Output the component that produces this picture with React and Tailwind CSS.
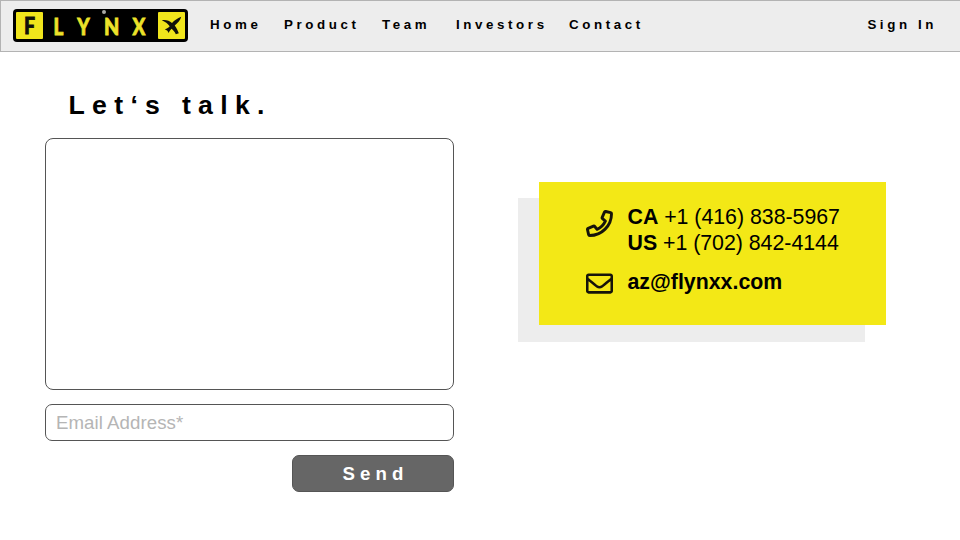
import React from "react";
import { FaRegEnvelope } from "react-icons/fa";

function Logo() {
  return (
    <div className="flex h-[33px] w-[175px] shrink-0 items-center rounded-[4px] bg-black pl-[3px] pr-[3px] font-['Lato','Open_Sans',sans-serif] text-[23px] leading-[29px] font-black text-[#ece22a]">
      <div className="flex h-[27px] w-[27px] items-center justify-center rounded-[1px] bg-[#f0e51c] text-[#11110a]">
        <span className="scale-x-[0.85] pl-[1px] [-webkit-text-stroke:0.8px_currentColor]">F</span>
      </div>
      <div className="relative flex h-[27px] flex-1 [-webkit-text-stroke:0.8px_currentColor]">
        <span className="ml-[9px] w-[13px] scale-x-[0.82] text-center">L</span>
        <span className="ml-[11px] w-[13px] scale-x-[0.82] text-center">Y</span>
        <span className="ml-[14px] w-[16px] scale-x-[0.86] text-center">N</span>
        <span className="ml-[12px] w-[16px] scale-x-[0.82] text-center">X</span>
        <i className="absolute left-[59px] -top-[2px] size-[4px] rounded-full bg-[#a9a9a6]" />
      </div>
      <div className="flex h-[27px] w-[27px] items-center justify-center rounded-[1px] bg-[#f0e51c]">
        <svg viewBox="0 0 27 27" className="size-[27px]" fill="#11110a">
          <path d="M3.8 8.2C7.6 7.4 11.2 8.4 14 11C16.5 8.3 19.4 6.4 23.2 4.8C22.4 8.2 19.8 11.2 16.7 13.4C18.4 15.8 19.9 18.5 20.8 21.2L17.8 22.2C16.8 20 15.4 18.2 13.6 16.8C12.2 18 11.4 19.4 10.6 21L9.4 18.7L6.8 17.2C9 16.8 10.6 15.7 11.7 14.3C10 11.5 7 9.8 3.8 8.2Z" />
        </svg>
      </div>
    </div>
  );
}

function PhoneIcon() {
  return (
    <svg viewBox="0 0 512 512" className="size-[27px]" fill="none" stroke="#16140a" strokeWidth="62" strokeLinejoin="round">
      <path
        transform="translate(28 28) scale(.89)"
        d="M493.4 24.6l-104-24c-11.3-2.6-22.9 3.3-27.5 13.9l-48 112c-4.2 9.8-1.4 21.3 6.9 28l60.6 49.6c-36 76.7-98.9 140.5-177.2 177.2l-49.6-60.6c-6.8-8.3-18.2-11.1-28-6.9l-112 48C3.9 366.5-2 378.1.6 389.4l24 104C27.1 504.2 36.7 512 48 512c256.1 0 464-207.5 464-464 0-11.2-7.7-20.9-18.6-23.4z"
      />
    </svg>
  );
}

export default function App() {
  return (
    <div className="h-[540px] w-[960px] overflow-hidden bg-white font-['Liberation_Sans',Arial,sans-serif] text-black">
      <header className="flex h-[52px] border border-r-0 border-[#b3b3b3] bg-[#ededed] pt-[8px] pl-[12px]">
        <Logo />
        <nav className="flex flex-1 pt-[7px] text-[13.33px] leading-[18px] font-bold tracking-[3.6px] whitespace-nowrap">
          <a className="ml-[22px] w-[74px]">Home</a>
          <a className="w-[98px]">Product</a>
          <a className="w-[74px]">Team</a>
          <a className="w-[113px]">Investors</a>
          <a>Contact</a>
          <a className="mr-[23px] ml-auto">Sign In</a>
        </nav>
      </header>
      <main className="flex">
        <form className="ml-[45px] flex w-[409px] flex-col">
          <h1 className="mt-[37px] ml-[23.5px] h-[49px] text-[26.67px] leading-[32px] font-bold tracking-[7.3px]">Let‘s talk.</h1>
          <textarea className="block h-[252px] resize-none rounded-[8px] border border-[#555] bg-white outline-none" />
          <input
            className="mt-[14px] h-[37px] rounded-[7px] border border-[#555] bg-white px-[10px] text-[18.67px] tracking-[0.05px] outline-none placeholder:text-[#b5b5b5]"
            placeholder="Email Address*"
          />
          <button type="button" className="mt-[14px] h-[37px] w-[162px] self-end rounded-[7px] border border-[#555] bg-[#666] pt-[1px] pl-[5px] text-[18.67px] font-bold tracking-[5.1px] text-white">
            Send
          </button>
        </form>
        <section className="mt-[146px] ml-[64px] h-[144px] w-[347px] bg-[#ededed]">
          <div className="-mt-[16px] ml-[21px] flex h-[143px] w-[347px] flex-col bg-[#f3e816] pt-[22px] pl-[47px] text-[21.33px] leading-[26px] whitespace-nowrap">
            <div className="flex">
              <div className="mt-[5.5px] w-[41.5px]"><PhoneIcon /></div>
              <div className="tracking-[-0.02px]">
                <p><b>CA</b> +1 (416) 838-5967</p>
                <p><b>US</b> +1 (702) 842-4144</p>
              </div>
            </div>
            <div className="mt-[13px] flex">
              <div className="mt-[1px] w-[41.5px]"><FaRegEnvelope className="size-[27px] text-[#16140a]" /></div>
              <b>az@flynxx.com</b>
            </div>
          </div>
        </section>
      </main>
    </div>
  );
}
